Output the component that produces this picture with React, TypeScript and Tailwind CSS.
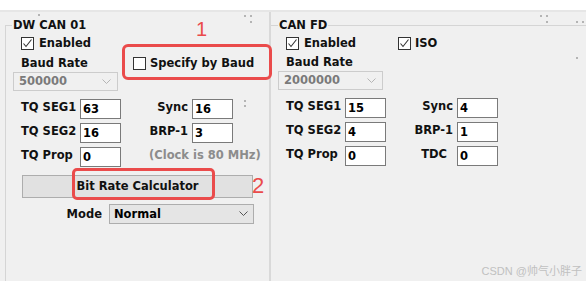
import React from 'react';

const Check: React.FC<{ checked?: boolean }> = ({ checked }) => (
  <span className="w-[13px] h-[13px] border border-[#333333] bg-white flex items-center justify-center shrink-0">
    {checked && (
      <svg width="11" height="11" viewBox="0 0 11 11">
        <polyline points="1.5,5.5 4,8.5 9.5,1.5" fill="none" stroke="#333333" strokeWidth="1.1" />
      </svg>
    )}
  </span>
);

const Chevron: React.FC<{ color: string }> = ({ color }) => (
  <svg width="9" height="6" viewBox="0 0 9 6">
    <polyline points="0.5,0.5 4.5,4.5 8.5,0.5" fill="none" stroke={color} strokeWidth="1" />
  </svg>
);

const Field: React.FC<{ value: string }> = ({ value }) => (
  <div className="h-[20px] border border-[#7a7a7a] bg-white pl-[2px] flex items-center text-black">{value}</div>
);

const Label: React.FC<{ text: string; right?: boolean; pr?: string }> = ({ text, right, pr }) => (
  <div className={`pt-[2px] whitespace-nowrap ${right ? 'text-right' : ''} ${pr ?? ''}`}>{text}</div>
);

type Row = [string, string, string | null, string | null];

const TimingGrid: React.FC<{ rows: Row[]; clock?: string }> = ({ rows, clock }) => (
  <div className="grid grid-cols-[59px_41px_71px_41px] gap-y-[4px] pl-[8px]">
    {rows.map(([l1, v1, l2, v2]) => (
      <React.Fragment key={l1}>
        <Label text={l1} />
        <Field value={v1} />
        {l2 !== null && v2 !== null ? (
          <>
            <Label text={l2} right pr={l2 === 'TDC' ? 'pr-[10px]' : 'pr-[4px]'} />
            <Field value={v2} />
          </>
        ) : (
          <div className="col-span-2 pl-[28px] pt-[2px] text-[#8c8c8c] whitespace-nowrap">{clock}</div>
        )}
      </React.Fragment>
    ))}
  </div>
);

const GroupTitle: React.FC<{ title: string; line?: boolean; corner?: boolean }> = ({ title, line, corner }) => (
  <div className="flex h-[13px] shrink-0">
    <div className={`w-[7px] h-[7px] mt-[6px] border-t border-[#d5d5d5] ${corner ? 'border-l' : ''}`} />
    <span className="px-px">{title}</span>
    {line && <div className="flex-1 mt-[6px] border-t border-[#d5d5d5]" />}
  </div>
);

const Dot: React.FC<{ x: number; y: number }> = ({ x, y }) => (
  <span className="absolute w-[2px] h-[2px] bg-[#b4b4b4]" style={{ left: x, top: y }} />
);

const dots = [
  [38, 14], [244, 15], [250, 15], [250, 21], [540, 15], [546, 15], [546, 21], [576, 21], [582, 21], [576, 57],
  [244, 100], [244, 105],
];

const App: React.FC = () => {
  return (
    <div className="relative w-[586px] h-[281px] overflow-hidden bg-white font-['DejaVu_Sans',sans-serif] text-[11.5px] leading-[13px] font-bold text-[#111111]">
      <div className="h-[10px] bg-white" />
      <div className="h-[2px] bg-[#e6e6e6]" />
      <div className="flex h-[269px] bg-[#f0f0f0]">
        {/* DW CAN 01 */}
        <div className="relative z-10 w-[269px] pl-[5px] pt-[7px] flex flex-col">
          <GroupTitle title="DW CAN 01" corner />
          <div className="relative flex-1 border-l border-[#d5d5d5] pl-[7px]">
            <div className="flex items-center gap-[5px] pl-[8px] pt-[5px]">
              <Check checked />
              <span>Enabled</span>
            </div>
            <div className="flex items-center pl-[8px] mt-[6px]">
              <span className="w-[112px]">Baud Rate</span>
              <span className="flex items-center gap-[4px] mt-[1px]">
                <Check />
                <span>Specify by Baud</span>
              </span>
            </div>
            <div className="mt-[2px] w-[105px] h-[19px] border border-[#cccccc] flex items-center justify-between pl-[5px] pr-[6px] text-[#7a7a7a]">
              <span>500000</span>
              <Chevron color="#b5b5b5" />
            </div>
            <div className="mt-[8px]">
              <TimingGrid
                rows={[
                  ['TQ SEG1', '63', 'Sync', '16'],
                  ['TQ SEG2', '16', 'BRP-1', '3'],
                  ['TQ Prop', '0', null, null],
                ]}
                clock="(Clock is 80 MHz)"
              />
            </div>
            <div className="mt-[8px] ml-[9px] w-[231px] h-[23px] border border-[#adadad] bg-[#e1e1e1] flex items-center justify-center">
              Bit Rate Calculator
            </div>
            <div className="mt-[6px] flex items-center">
              <span className="w-[96px] text-right pr-[7px]">Mode</span>
              <div className="w-[145px] h-[20px] border border-[#adadad] bg-[#e5e5e5] flex items-center justify-between pl-[4px] pr-[5px] text-black">
                <span>Normal</span>
                <Chevron color="#555555" />
              </div>
            </div>

            {/* annotations */}
            <div className="absolute left-[116px] top-[12px] w-[150px] h-[36px] border-[3px] border-[#ea4b4b] rounded-[6px]" />
            <div className="absolute left-[190px] top-[-13px] font-['Liberation_Sans',sans-serif] font-normal text-[20px] leading-[20px] text-[#ea4b4b]">1</div>
            <div className="absolute left-[66px] top-[136px] w-[143px] h-[32px] border-[3px] border-[#ea4b4b] rounded-[5px]" />
            <div className="absolute left-[246px] top-[143px] font-['Liberation_Sans',sans-serif] font-normal text-[22px] leading-[22px] text-[#ea4b4b]">2</div>
          </div>
        </div>

        <div className="w-[2px] bg-[#d9d9d9]" />

        {/* CAN FD */}
        <div className="flex-1 pt-[7px]">
          <GroupTitle title="CAN FD" line />
          <div className="pl-[7px]">
            <div className="flex items-center pl-[8px] pt-[5px]">
              <span className="flex items-center gap-[5px] w-[112px]">
                <Check checked />
                <span>Enabled</span>
              </span>
              <span className="flex items-center gap-[4px]">
                <Check checked />
                <span>ISO</span>
              </span>
            </div>
            <div className="pl-[8px] mt-[6px]">Baud Rate</div>
            <div className="mt-[2px] w-[105px] h-[19px] border border-[#cccccc] flex items-center justify-between pl-[5px] pr-[6px] text-[#7a7a7a]">
              <span>2000000</span>
              <Chevron color="#b5b5b5" />
            </div>
            <div className="mt-[8px]">
              <TimingGrid
                rows={[
                  ['TQ SEG1', '15', 'Sync', '4'],
                  ['TQ SEG2', '4', 'BRP-1', '1'],
                  ['TQ Prop', '0', 'TDC', '0'],
                ]}
              />
            </div>
          </div>
        </div>
      </div>

      {dots.map(([x, y]) => (
        <Dot key={`${x}-${y}`} x={x} y={y} />
      ))}

      <div className="absolute right-[4px] bottom-[3px] font-['Liberation_Sans','Noto_Sans_CJK_SC',sans-serif] font-normal text-[11px] text-[#c0c0c0]">
        CSDN @帅气小胖子
      </div>
    </div>
  );
};

export default App;
